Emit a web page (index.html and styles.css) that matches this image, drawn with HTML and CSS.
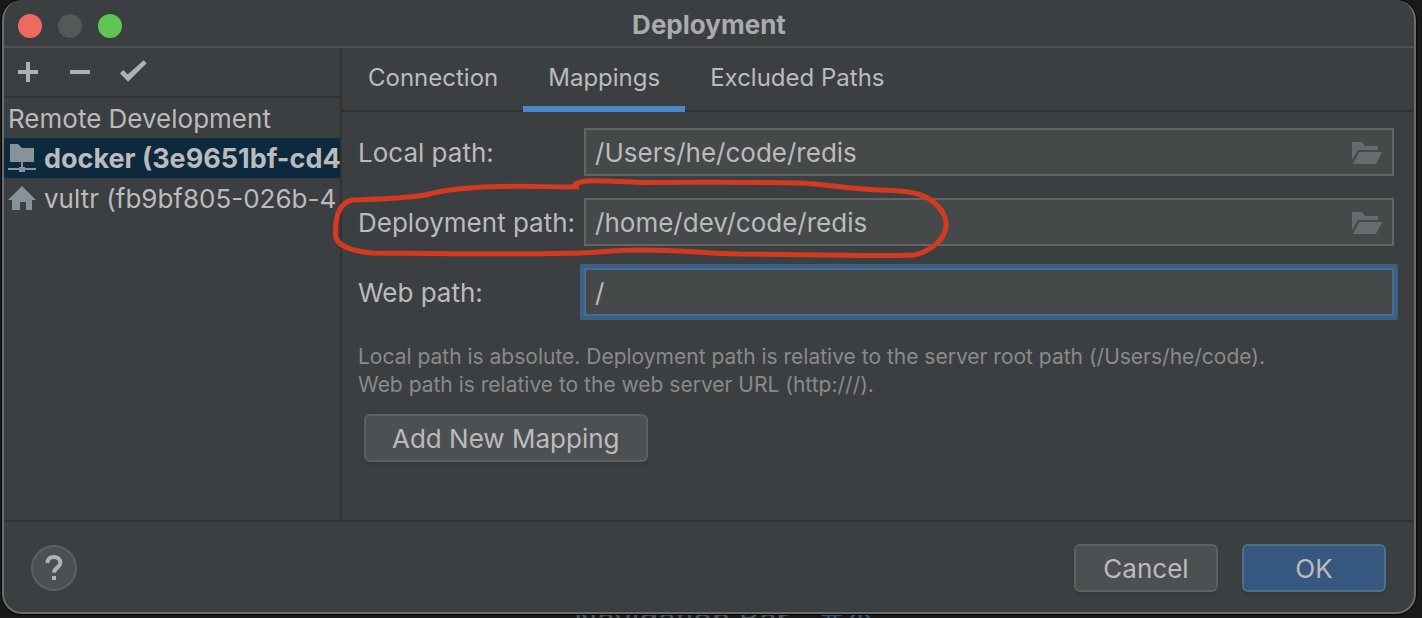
FILE: index.html
```html
<!DOCTYPE html>
<html lang="en">
<head>
<meta charset="utf-8">
<title>Deployment</title>
<link rel="stylesheet" href="styles.css">
</head>
<body>
<div class="backdrop" aria-hidden="true"><span>Navigation Bar</span><span class="backdrop-key">⌘↑</span></div>
<main class="dialog">
  <header class="titlebar">
    <div class="lights">
      <button class="light light-close" aria-label="Close"></button>
      <button class="light light-min" aria-label="Minimize"></button>
      <button class="light light-zoom" aria-label="Zoom"></button>
    </div>
    <h1 class="title">Deployment</h1>
  </header>
  <div class="content">
    <aside class="sidebar">
      <div class="toolbar">
        <button class="tool" aria-label="Add"><svg width="28" height="28" viewBox="0 0 28 28"><path d="M4 12h8V4h4v8h8v4h-8v8h-4v-8H4z"/></svg></button>
        <button class="tool" aria-label="Remove"><svg width="28" height="28" viewBox="0 0 28 28"><path d="M4 12h20v4H4z"/></svg></button>
        <button class="tool" aria-label="Use as default"><svg width="28" height="28" viewBox="0 0 28 28"><path d="M2 15.200 5.200 12l4.500 4.500L25.700 2.200l3 3L10 23.800z"/></svg></button>
      </div>
      <ul class="servers">
        <li class="server group">Remote Development</li>
        <li class="server selected"><svg width="28" height="28" viewBox="0 0 28 28"><path d="M2-1h8l4 4h12v14H15v5h2v1h11v2H17v2h-6v-2H0v-2h11v-1h2v-5H2z"/></svg><span class="server-name">docker (3e9651bf-cd4</span></li>
        <li class="server"><svg width="28" height="28" viewBox="0 0 28 28"><path d="M14 1 28 15h-4v10h-6v-8h-6v8H4V15H0z"/></svg><span class="server-name">vultr (fb9bf805-026b-4</span></li>
      </ul>
    </aside>
    <section class="panel">
      <nav class="tabs" role="tablist">
        <button class="tab" role="tab" aria-selected="false">Connection</button>
        <button class="tab active" role="tab" aria-selected="true">Mappings</button>
        <button class="tab" role="tab" aria-selected="false">Excluded Paths</button>
      </nav>
      <div class="mappings">
        <form class="form">
          <label for="local">Local path:</label>
          <div class="field">
            <input id="local" type="text" value="/Users/he/code/redis">
            <button class="browse" type="button" aria-label="Browse local path"><svg width="30" height="22" viewBox="0 0 30 22"><path d="M0 0h10l3 4h13v4H6L0 18zM7 10h23l-6 12H1z"/></svg></button>
          </div>
          <label for="remote">Deployment path:</label>
          <div class="field">
            <input id="remote" type="text" value="/home/dev/code/redis">
            <button class="browse" type="button" aria-label="Browse deployment path"><svg width="30" height="22" viewBox="0 0 30 22"><path d="M0 0h10l3 4h13v4H6L0 18zM7 10h23l-6 12H1z"/></svg></button>
          </div>
          <label for="web">Web path:</label>
          <div class="field focused">
            <input id="web" type="text" value="/">
          </div>
        </form>
        <p class="hint">Local path is absolute. Deployment path is relative to the server root path (/Users/he/code).<br>Web path is relative to the web server URL (http:///).</p>
        <button class="button add">Add New Mapping</button>
      </div>
    </section>
  </div>
  <footer class="footer">
    <button class="help" aria-label="Help"><svg width="18" height="26" viewBox="0 0 18 26"><path d="M2.500 8C2.500 4.200 5 2 8.800 2s6.500 2.300 6.500 5.700c0 4.800-6.300 5-6.300 10" fill="none" stroke="currentColor" stroke-width="4"/><path d="M7 21h4v4H7z" fill="currentColor"/></svg></button>
    <div class="actions">
      <button class="button">Cancel</button>
      <button class="button primary">OK</button>
    </div>
  </footer>
  <svg class="marker" width="620" height="84" viewBox="330 176 620 84" aria-hidden="true"><path d="M579 187C545 187 510 185 475 187.500C452 189 440 191 425 195C400 199 375 199 352 200C338 203 335 220 335.500 236C337 245 350 251 372 253C430 253 510 255 580 253C605 252 615 250 640 250C680 250 705 253 740 254C800 254 865 257 914 255C931 251 944 240 946 227C947 213 936 203 926 197C914 191 900 191 880 190C850 189 825 184 800 183C750 182 690 182 640 182.500C620 182 605 180 586 181C580 182 577 183 574 185"/></svg>
</main>
</body>
</html>
```

FILE: styles.css
```css
* {
  box-sizing: border-box;
}

body {
  margin: 0;
  height: 100vh;
  padding: 0 6px 4px 2px;
  overflow: hidden;
  background: #191919;
  color: #bbbbbb;
  font: 26px/32px Inter, "Liberation Sans", sans-serif;
}

button,
input {
  margin: 0;
  padding: 0;
  border: 0;
  background: none;
  color: inherit;
  font: inherit;
}

svg {
  display: block;
  overflow: visible;
  fill: currentColor;
}

.backdrop {
  position: absolute;
  left: 574px;
  bottom: -17px;
  display: flex;
  gap: 28px;
  color: #555555;
  font-size: 31px;
}

.backdrop-key {
  color: #2f5487;
}

.dialog {
  position: relative;
  display: flex;
  flex-direction: column;
  height: 100%;
  overflow: hidden;
  border: 2px solid #6a6d6f;
  border-top: 0;
  border-radius: 20px;
  background: #3c3f41;
  box-shadow: 0 0 0 1px #050505;
}

.titlebar {
  display: grid;
  grid-template-columns: 1fr auto 1fr;
  align-items: center;
  padding: 4px 14px 0;
  height: 48px;
  border-bottom: 2px solid #515151;
}

.lights {
  display: flex;
  gap: 16px;
  padding-top: 2px;
}

.light {
  width: 24px;
  height: 24px;
  border-radius: 50%;
}

.light-close {
  background: #ed6a5e;
}

.light-min {
  background: #555859;
}

.light-zoom {
  background: #61c554;
}

.title {
  margin: 0;
  color: #a9abad;
  font-size: 26px;
  font-weight: 700;
}

.content {
  display: flex;
  flex: 1;
  min-height: 0;
}

.sidebar {
  flex: none;
  width: 338px;
  border-right: 2px solid #323232;
}

.toolbar {
  display: flex;
  align-items: center;
  gap: 24px;
  height: 50px;
  padding: 0 10px;
  border-bottom: 2px solid #323232;
}

.tool {
  color: #afb1b3;
}

.servers {
  margin: 0;
  padding: 0;
  list-style: none;
}

.server {
  display: flex;
  align-items: center;
  gap: 8px;
  height: 40px;
  padding: 2px 0 0 4px;
  overflow: hidden;
  white-space: nowrap;
}

.server svg {
  flex: none;
  color: #87939a;
}

.selected {
  background: #0d293e;
  font-size: 27px;
  font-weight: 700;
}

.panel {
  flex: 1;
  min-width: 0;
}

.tabs {
  display: flex;
  height: 64px;
  padding-left: 1px;
  border-bottom: 2px solid #323232;
}

.tab {
  height: 64px;
  padding: 0 25px;
  border-top: 2px solid transparent;
  border-bottom: 6px solid transparent;
  font-size: 24px;
}

.tab.active {
  border-bottom-color: #4a88c7;
}

.mappings {
  padding: 16px 20px 0 16px;
}

.form {
  display: grid;
  grid-template-columns: auto 1fr;
  align-items: center;
  gap: 22px 9px;
}

.form label {
  padding-top: 2px;
}

.field {
  display: flex;
  align-items: center;
  height: 48px;
  padding: 0 10px 0 9px;
  border: 2px solid #646464;
  background: #45494a;
}

.field input {
  flex: 1;
  min-width: 0;
  padding-top: 2px;
  outline: 0;
}

.browse {
  padding-top: 2px;
  color: #646c70;
}

.focused {
  border-color: #466d94;
  box-shadow: 0 0 0 4px #3d6185;
  border-radius: 1px;
}

.hint {
  margin: 27px 0 15px;
  color: #8a8a8a;
  font-size: 21px;
  line-height: 28px;
}

.button {
  height: 48px;
  min-width: 144px;
  padding: 2px 26px 0;
  border: 2px solid #5e6060;
  border-radius: 6px;
  background: #4c5052;
  box-shadow: 0 3px 2px #36393b;
}

.add {
  margin-left: 6px;
}

.primary {
  border-color: #4c708c;
  background: #365880;
}

.footer {
  display: flex;
  align-items: center;
  justify-content: space-between;
  height: 92px;
  padding: 2px 28px 0 27px;
  border-top: 2px solid #323232;
}

.help {
  display: grid;
  place-items: center;
  width: 46px;
  height: 46px;
  border: 2px solid #5e6060;
  border-radius: 50%;
  background: #4c5052;
  color: #afb1b3;
}

.actions {
  display: flex;
  gap: 24px;
}

.marker {
  position: absolute;
  left: 326px;
  top: 176px;
  fill: none;
  stroke: #d33a20;
  stroke-width: 5;
  stroke-linejoin: round;
  pointer-events: none;
}
```
